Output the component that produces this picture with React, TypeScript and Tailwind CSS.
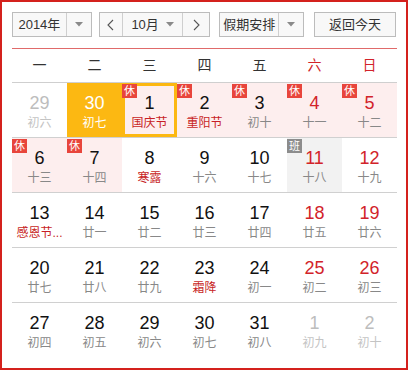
const weekDays = ["一", "二", "三", "四", "五", "六", "日"];

type Day = {
  day: number;
  lunar: string;
  other?: boolean;
  red?: boolean;
  fest?: boolean;
  tag?: "休" | "班";
  today?: boolean;
  selected?: boolean;
};

const weeks: Day[][] = [
  [
    { day: 29, lunar: "初六", other: true },
    { day: 30, lunar: "初七", today: true },
    { day: 1, lunar: "国庆节", fest: true, tag: "休", selected: true },
    { day: 2, lunar: "重阳节", fest: true, tag: "休" },
    { day: 3, lunar: "初十", tag: "休" },
    { day: 4, lunar: "十一", red: true, tag: "休" },
    { day: 5, lunar: "十二", red: true, tag: "休" },
  ],
  [
    { day: 6, lunar: "十三", tag: "休" },
    { day: 7, lunar: "十四", tag: "休" },
    { day: 8, lunar: "寒露", fest: true },
    { day: 9, lunar: "十六" },
    { day: 10, lunar: "十七" },
    { day: 11, lunar: "十八", red: true, tag: "班" },
    { day: 12, lunar: "十九", red: true },
  ],
  [
    { day: 13, lunar: "感恩节...", fest: true },
    { day: 14, lunar: "廿一" },
    { day: 15, lunar: "廿二" },
    { day: 16, lunar: "廿三" },
    { day: 17, lunar: "廿四" },
    { day: 18, lunar: "廿五", red: true },
    { day: 19, lunar: "廿六", red: true },
  ],
  [
    { day: 20, lunar: "廿七" },
    { day: 21, lunar: "廿八" },
    { day: 22, lunar: "廿九" },
    { day: 23, lunar: "霜降", fest: true },
    { day: 24, lunar: "初一" },
    { day: 25, lunar: "初二", red: true },
    { day: 26, lunar: "初三", red: true },
  ],
  [
    { day: 27, lunar: "初四" },
    { day: 28, lunar: "初五" },
    { day: 29, lunar: "初六" },
    { day: 30, lunar: "初七" },
    { day: 31, lunar: "初八" },
    { day: 1, lunar: "初九", other: true },
    { day: 2, lunar: "初十", other: true },
  ],
];

const Caret = () => (
  <svg width="8" height="5" viewBox="0 0 8 5">
    <path d="M0 0h8L4 4.5z" fill="#8a8a8a" />
  </svg>
);

const Chevron = ({ dir }: { dir: "left" | "right" }) => (
  <svg width="7" height="12" viewBox="0 0 7 12">
    <path
      d={dir === "left" ? "M6 1 1 6l5 5" : "M1 1l5 5-5 5"}
      fill="none"
      stroke="#555"
      strokeWidth="1.1"
    />
  </svg>
);

function DayCell({ d }: { d: Day }) {
  let bg = "bg-white";
  if (d.today) bg = "bg-[#fcb812]";
  else if (d.tag === "休") bg = "bg-[#fdeeee]";
  else if (d.tag === "班") bg = "bg-[#f2f2f2]";

  let numColor = "text-[#111]";
  if (d.today) numColor = "text-white";
  else if (d.other) numColor = "text-[#bdbdbd]";
  else if (d.red) numColor = "text-[#d2232a]";

  let lunarColor = "text-[#888]";
  if (d.today) lunarColor = "text-white";
  else if (d.other) lunarColor = "text-[#c4c4c4]";
  else if (d.fest) lunarColor = "text-[#c81f26]";

  return (
    <div className={`relative h-[54px] ${bg}`}>
      {d.selected && (
        <div className="absolute inset-0 border-[3px] border-[#fcb812]" />
      )}
      {d.tag && (
        <span
          className={`absolute left-0 top-[1px] flex h-[14px] w-[15px] items-center justify-center text-[11px] leading-none text-white ${
            d.tag === "休" ? "bg-[#e8453c]" : "bg-[#8c8c8c]"
          }`}
        >
          {d.tag}
        </span>
      )}
      <div className="relative flex flex-col items-center pt-[10px]">
        <div className={`h-[20px] text-[18px] leading-[20px] ${numColor}`}>
          {d.day}
        </div>
        <div className={`mt-[1px] text-[12px] leading-[18px] ${lunarColor}`}>
          {d.lunar}
        </div>
      </div>
    </div>
  );
}

export default function App() {
  return (
    <div
      className="h-[370px] w-[408px] border-2 border-[#d4211d] bg-white px-[10px] pt-[10px]"
      style={{ fontFamily: '"Liberation Sans", "Noto Sans CJK SC", sans-serif' }}
    >
      {/* toolbar */}
      <div className="flex h-[25px] items-stretch text-[13px] text-[#333]">
        <div className="flex w-[80px] border border-[#bcbcbc] bg-[#f8f8f8]">
          <div className="flex flex-1 items-center justify-center border-r border-[#cfcfcf]">
            2014年
          </div>
          <div className="flex w-[24px] items-center justify-center">
            <Caret />
          </div>
        </div>

        <div className="ml-[7px] flex w-[112px] border border-[#bcbcbc] bg-[#f8f8f8]">
          <div className="flex w-[23px] items-center justify-center border-r border-[#cfcfcf]">
            <Chevron dir="left" />
          </div>
          <div className="flex flex-1 items-center justify-center gap-[7px] border-r border-[#cfcfcf]">
            <span>10月</span>
            <Caret />
          </div>
          <div className="flex w-[26px] items-center justify-center">
            <Chevron dir="right" />
          </div>
        </div>

        <div className="ml-[9px] flex w-[85px] border border-[#bcbcbc] bg-[#f8f8f8]">
          <div className="flex flex-1 items-center justify-center border-r border-[#cfcfcf]">
            假期安排
          </div>
          <div className="flex w-[24px] items-center justify-center">
            <Caret />
          </div>
        </div>

        <div className="ml-[10px] flex w-[82px] items-center justify-center border border-[#bcbcbc] bg-[#f8f8f8]">
          返回今天
        </div>
      </div>

      {/* calendar */}
      <div className="mt-[11px] w-[385px] border-t border-[#e06a6a]">
        <div className="grid h-[34px] grid-cols-7 items-center border-b border-[#cfcfcf] text-[14px]">
          {weekDays.map((w, i) => (
            <div
              key={w}
              className={`text-center ${i >= 5 ? "text-[#d2232a]" : "text-[#333]"}`}
            >
              {w}
            </div>
          ))}
        </div>
        {weeks.map((week, wi) => (
          <div
            key={wi}
            className={`grid grid-cols-7 ${
              wi < weeks.length - 1 ? "border-b border-[#d0d0d0]" : ""
            }`}
          >
            {week.map((d, di) => (
              <DayCell key={di} d={d} />
            ))}
          </div>
        ))}
      </div>
    </div>
  );
}
